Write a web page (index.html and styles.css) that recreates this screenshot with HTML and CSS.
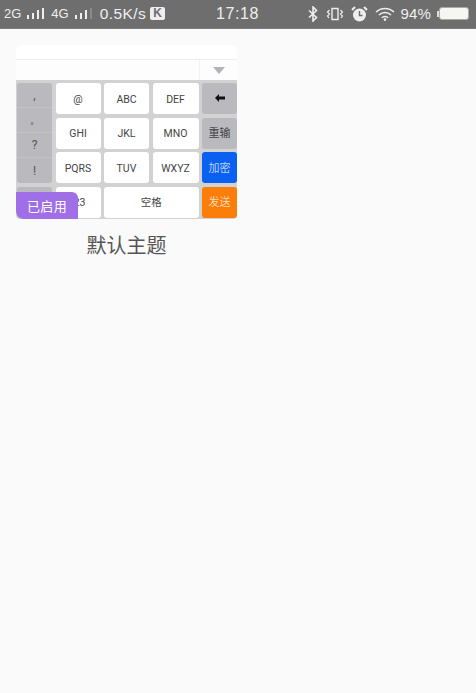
FILE: index.html
```html
<!DOCTYPE html>
<html lang="zh">
<head>
<meta charset="utf-8">
<title>默认主题</title>
<link rel="stylesheet" href="styles.css">
</head>
<body>
<header class="status">
  <div class="status-left">
    <span class="net">2G</span>
    <svg class="bars" width="18" height="13" viewBox="0 0 18 13"><path d="M1 8h2v4H1zM6 6h2v6H6zM11 3h2v9h-2zM16 1h2v11h-2z" fill="#eee"/></svg>
    <span class="net net-b">4G</span>
    <svg class="bars" width="18" height="13" viewBox="0 0 18 13"><path d="M1 8h2v4H1zM6 6h2v6H6zM11 3h2v9h-2z" fill="#eee"/><path d="M16 1h2v11h-2z" fill="#8a8a8a"/></svg>
    <span class="speed">0.5K/s</span>
    <span class="k">K</span>
  </div>
  <div class="time">17:18</div>
  <div class="status-right">
    <svg width="12" height="16" viewBox="0 0 12 16"><path d="M2 4.500l7.500 7L6 15V1l3.500 3.500L2 11.500" fill="none" stroke="#eee" stroke-width="1.600"/></svg>
    <svg class="vib" width="18" height="14" viewBox="0 0 18 14"><path d="M6 1.500h6v11H6z" fill="none" stroke="#eee" stroke-width="1.400"/><path d="M3.500 3l-2 2 2 2-2 2 1.500 2M14.500 3l2 2-2 2 2 2-1.500 2" fill="none" stroke="#eee" stroke-width="1.200"/></svg>
    <svg class="clock" width="17" height="16" viewBox="0 0 17 16"><circle cx="8.500" cy="9" r="6.500" fill="#eee"/><path d="M8.500 5v4.500h3" fill="none" stroke="#6e6e6e" stroke-width="1.400"/><path d="M1 4l3-3M16 4l-3-3" stroke="#eee" stroke-width="2"/></svg>
    <svg class="wifi" width="20" height="14" viewBox="0 0 20 14"><path d="M1 5a13 13 0 0 1 18 0M4 8a8.500 8.500 0 0 1 12 0M6.800 10.800a4.500 4.500 0 0 1 6.400 0" fill="none" stroke="#eee" stroke-width="1.500"/><circle cx="10" cy="12.600" r="1.300" fill="#eee"/></svg>
    <span class="pct">94%</span>
    <span class="batt"><span class="batt-cap"></span><span class="batt-body"></span></span>
  </div>
</header>

<main class="content">
  <article class="theme">
    <div class="preview">
      <div class="top"></div>
      <div class="candidates">
        <div class="cand-fill"></div>
        <div class="cand-arrow"><span class="tri"></span></div>
      </div>
      <div class="keyboard">
        <div class="punct">
          <span class="p-key">,</span>
          <span class="p-key p-small">。</span>
          <span class="p-key">?</span>
          <span class="p-key">!</span>
        </div>
        <div class="key">@</div>
        <div class="key">ABC</div>
        <div class="key">DEF</div>
        <div class="key fn"><svg width="10" height="8" viewBox="0 0 10 8"><path d="M0 4l4-4v2.500h6v3H4V8z" fill="#111"/></svg></div>
        <div class="key">GHI</div>
        <div class="key">JKL</div>
        <div class="key">MNO</div>
        <div class="key fn">重输</div>
        <div class="key">PQRS</div>
        <div class="key">TUV</div>
        <div class="key">WXYZ</div>
        <div class="key blue">加密</div>
        <div class="key fn sym"></div>
        <div class="key num">123</div>
        <div class="key wide">空格</div>
        <div class="key orange">发送</div>
      </div>
      <div class="badge">已启用</div>
    </div>
    <h2 class="name">默认主题</h2>
  </article>
</main>
</body>
</html>
```

FILE: styles.css
```css
* { box-sizing: border-box; }
html, body { margin: 0; height: 100%; }
body {
  background: #fafafa;
  font-family: "Liberation Sans", "Noto Sans CJK SC", sans-serif;
  overflow: hidden;
}
.status {
  height: 29px;
  background: #6e6e6e;
  color: #eee;
  display: grid;
  grid-template-columns: 1fr auto 1fr;
  align-items: center;
  padding: 0 7px 1px 4px;
  border-bottom: 1px solid #7c7c7c;
}
.status-left, .status-right { display: flex; align-items: center; }
.status-right { justify-content: flex-end; gap: 7px; }
.net { font-size: 13px; }
.net-b { margin-left: 7px; }
.bars { margin-left: 5px; }
.speed { font-size: 15.500px; margin-left: 8px; letter-spacing: .4px; }
.k {
  margin-left: 4px;
  width: 15px;
  height: 13px;
  background: #eee;
  color: #6e6e6e;
  font-size: 12px;
  font-weight: 700;
  line-height: 13px;
  text-align: center;
  border-radius: 2px;
}
.time { font-size: 16px; letter-spacing: .6px; margin-left: 2px; }
.pct { font-size: 15px; margin-left: -2px; letter-spacing: .2px; }
.batt { display: flex; align-items: center; margin-left: -1px; }
.batt-cap { width: 2px; height: 6px; background: #ddd; }
.batt-body {
  width: 30px;
  height: 13px;
  background: #f7f7f2;
  border: 1px solid #aaa;
  border-radius: 3px;
}
.content { padding: 16px 16px 0; }
.theme { width: 221px; }
.preview {
  position: relative;
  border-radius: 8px 8px 4px 4px;
  overflow: hidden;
  background: #fff;
}
.top { height: 14px; background: #fff; }
.candidates {
  height: 21px;
  display: flex;
  background: #fdfdfd;
  border-top: 1px solid #eeeeee;
}
.cand-fill { flex: 1; }
.cand-arrow {
  width: 38px;
  border-left: 1px solid #f2f2f2;
  display: flex;
  align-items: center;
  justify-content: center;
}
.tri {
  width: 0;
  height: 0;
  border-left: 6px solid transparent;
  border-right: 6px solid transparent;
  border-top: 7px solid #b3b3ba;
}
.keyboard {
  background: #d2d2d2;
  display: grid;
  grid-template-columns: 35px 45px 45px 46px 35px;
  grid-auto-rows: 31px;
  gap: 3.500px 3.500px;
  padding: 3px 0 2px 1px;
  height: 139px;
  font-family: Roboto, "Noto Sans CJK SC", sans-serif;
}
.punct {
  grid-row: 1 / span 3;
  background: #b9b9be;
  border-radius: 3px;
  display: grid;
  grid-template-rows: repeat(4, 1fr);
}
.p-key {
  display: flex;
  align-items: center;
  justify-content: center;
  font-size: 12px;
  color: #555;
  border-bottom: 1px solid #c2c2c6;
}
.p-small { font-size: 8px; }
.p-key:last-child { border-bottom: 0; }
.key {
  background: #fff;
  border-radius: 3px;
  display: flex;
  align-items: center;
  justify-content: center;
  padding-top: 1px;
  font-size: 10.500px;
  color: #444;
}
.fn { background: #b9b9be; font-size: 11px; padding: 0 0 2px; }
.blue { background: #0a60f0; color: #b8d2ff; font-size: 11px; padding: 0 0 2px; }
.orange { background: #fb7d0a; color: #ffd9b0; font-size: 11px; padding: 0 0 3px; }
.wide { grid-column: span 2; padding: 0 0 1px; }
.num { justify-content: flex-end; padding-right: 15px; }
.badge {
  position: absolute;
  left: 0;
  bottom: 0;
  width: 62px;
  height: 27px;
  background: #a06ee6;
  color: #fff;
  font-size: 13px;
  letter-spacing: .4px;
  display: flex;
  align-items: center;
  justify-content: center;
  border-radius: 0 6px 0 8px;
}
.name {
  margin: 15px 0 0;
  text-align: center;
  font-size: 20px;
  font-weight: 400;
  color: #555;
  line-height: 24px;
}
```
